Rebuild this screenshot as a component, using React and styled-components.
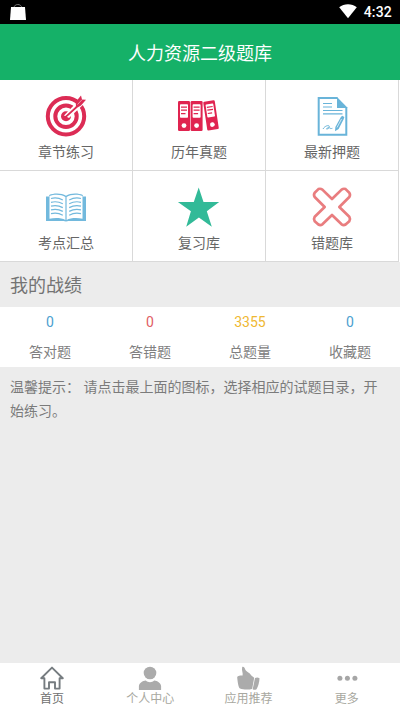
import React from "react";
import styled, { createGlobalStyle } from "styled-components";

const Global = createGlobalStyle`
  * { box-sizing: border-box; }
  body {
    margin: 0;
    background: #ececec;
    font-family: Roboto, "Noto Sans CJK SC", sans-serif;
  }
  svg { display: block; flex: none; }
`;

const Screen = styled.div`
  width: 400px;
  height: 710px;
  display: flex;
  flex-direction: column;
  overflow: hidden;
  background: #ececec;
`;

const StatusBar = styled.div`
  height: 24px;
  flex: none;
  display: flex;
  align-items: center;
  justify-content: space-between;
  padding: 0 8px 0 9px;
  background: #000;
`;

const StatusRight = styled.div`
  display: flex;
  align-items: flex-start;
  gap: 7px;
`;

const Clock = styled.span`
  color: #fff;
  font-size: 14px;
  font-weight: 500;
  line-height: 24px;
  letter-spacing: 0.2px;
`;

const Header = styled.header`
  height: 56px;
  flex: none;
  display: flex;
  align-items: center;
  justify-content: center;
  background: #15b168;
  color: #fff;
  font-size: 18px;
`;

const MenuGrid = styled.div`
  flex: none;
  display: grid;
  grid-template-columns: repeat(3, 133px) 1px;
  grid-auto-rows: 91px;
  background: #fff;
`;

const MenuCell = styled.div`
  grid-column: ${(p) => p.$col};
  display: flex;
  flex-direction: column;
  align-items: center;
  padding-top: 14px;
  border-right: 1px solid #d9d9d9;
  border-bottom: 1px solid #d9d9d9;
`;

const MenuLabel = styled.span`
  margin-top: 4px;
  color: #666;
  font-size: 14px;
  line-height: 20px;
`;

const SectionTitle = styled.h2`
  height: 45px;
  flex: none;
  margin: 0;
  padding: 0 10px;
  color: #737373;
  font-size: 18px;
  font-weight: 400;
  line-height: 47px;
`;

const Stats = styled.div`
  height: 60px;
  flex: none;
  display: grid;
  grid-template-columns: repeat(4, 1fr);
  background: #fff;
`;

const Stat = styled.div`
  display: flex;
  flex-direction: column;
  align-items: center;
`;

const StatValue = styled.span`
  height: 30px;
  color: ${(p) => p.$color};
  font-size: 14px;
  line-height: 31px;
`;

const StatLabel = styled.span`
  height: 30px;
  color: #808080;
  font-size: 14px;
  line-height: 30px;
`;

const Tip = styled.p`
  flex: 1;
  margin: 0;
  padding: 8px 10px;
  color: #7b7b7b;
  font-size: 14px;
  line-height: 24px;
`;

const TabBar = styled.nav`
  height: 47px;
  flex: none;
  display: grid;
  grid-template-columns: repeat(4, 1fr);
  padding: 3px 4px 0 3px;
  background: #fff;
`;

const Tab = styled.div`
  display: flex;
  flex-direction: column;
  align-items: center;
  color: ${(p) => (p.$active ? "#707070" : "#a8a8a0")};
  font-size: 12px;
  line-height: 19px;
`;

const Icon44 = ({ children }) => (
  <svg width="44" height="44" viewBox="0 0 44 44" fill="none">{children}</svg>
);

const TargetIcon = () => (
  <Icon44>
    <g stroke="#dc2c55">
      <circle cx="22" cy="22.3" r="18.2" strokeWidth="4" />
      <circle cx="22" cy="22.3" r="10.7" strokeWidth="4" />
    </g>
    <circle cx="22" cy="22.3" r="5" fill="#dc2c55" />
    <path d="M20 21.5L36 5L42 8L25 24Z" fill="#fff" />
    <path d="M21 22.5L32 12.5L31.7 8L37 1.5L38 5.5L42 5.7L37 11.5L33.5 13.5L22.3 23.5Z" fill="#dc2c55" />
    <path d="M20.8 23.2L33 12" stroke="#dc2c55" strokeWidth="1.2" />
    <path d="M21.5 21.5L31.5 12.2" stroke="#fff" strokeWidth=".8" />
    <path d="M33.5 10.5L38 5.7" stroke="#fff" strokeWidth=".5" />
  </Icon44>
);

const Binder = ({ transform }) => (
  <g transform={transform}>
    <rect width="12" height="30" rx="1.2" fill="#e02450" />
    <rect x="2" y="3.2" width="8" height="13.6" rx=".8" fill="#fff" />
    <path d="M3 6.2H9M3 9.2H9M3 12.6H7.5" stroke="#e02450" strokeWidth="1.2" />
    <circle cx="6" cy="24.6" r="2.4" fill="#fff" />
  </g>
);

const BindersIcon = () => (
  <Icon44>
    <Binder transform="translate(1 7)" />
    <Binder transform="translate(13.6 7)" />
    <Binder transform="translate(26.1 7.8) rotate(-8.5) scale(.97)" />
  </Icon44>
);

const PaperIcon = () => (
  <Icon44>
    <path d="M27.5 4H8.7V40.7H36.3V13" stroke="#69b4d9" strokeWidth="2" />
    <path d="M27 3L37.3 13.5V14H27Z" fill="#69b4d9" />
    <path d="M13 9.5H22M13 13H22M13 16.5H32.5M13 19.8H32.5" stroke="#69b4d9" strokeWidth="1.2" />
    <path d="M32.1 21.7L34.4 23L33.5 25.5L28.6 35L25 37.2L25.4 33L30.6 23.5Z" fill="#69b4d9" />
    <path d="M27 33.5L31.5 25" stroke="#fff" strokeWidth=".7" />
    <path d="M13 35C15 31.5 19 31 19.3 32.2C19.5 33.6 15.5 34.6 16.7 35C18 35.2 20 32.7 20.2 34.1C20.3 35 21.3 34.5 22.4 34.3" stroke="#69b4d9" strokeWidth="1" />
  </Icon44>
);

const BookIcon = () => (
  <Icon44>
    <path d="M2 11.5H5.2V10C10 7.8 18 8 22 10.8C26 8 34 7.8 38.8 10V11.5H42V36H24.5L22 36.6L19.5 36H2Z" fill="#72b9dd" />
    <path d="M5.5 11C10.5 9.1 17.5 9.4 21.4 12V35C17.5 32.8 10.5 32.7 5.5 33.8Z" fill="#fff" />
    <path d="M38.5 11C33.5 9.1 26.5 9.4 22.6 12V35C26.5 32.8 33.5 32.7 38.5 33.8Z" fill="#fff" />
    {[13.5, 17.3, 21.1, 24.9, 28.7].map((y) => (
      <g key={y} stroke="#72b9dd" strokeWidth="1.2">
        <path d={`M7 ${y}C11 ${y - 1} 15 ${y - 0.6} 18.8 ${y + 1.5}`} />
        <path d={`M37 ${y}C33 ${y - 1} 29 ${y - 0.6} 25.2 ${y + 1.5}`} />
      </g>
    ))}
  </Icon44>
);

const StarIcon = () => (
  <Icon44>
    <path d="M21.7 2.5L26.5 17H42.2L29.8 26.3L34.8 41.8L21.9 32.4L9.2 41.8L13.9 26.3L.9 17H16.8Z" fill="#32ba98" />
  </Icon44>
);

const CrossIcon = () => (
  <Icon44>
    <path
      d="M4.7 7.7L8.4 4.1Q10.4 3.2 12.4 4.6L22 14L31.6 4.6Q33.6 3.2 35.6 4.1L39.3 7.7Q40.7 9.8 39.3 12L29.3 22L39.3 31.7Q40.7 34 39.3 36.2L35.6 39.5Q33.6 40.7 31.6 39.3L22 30L12.4 39.3Q10.4 40.7 8.4 39.5L4.7 36.2Q3.3 34 4.7 31.7L14.7 22L4.7 12Q3.3 9.8 4.7 7.7Z"
      stroke="#e97d7f"
      strokeWidth="2.7"
      strokeLinejoin="round"
    />
  </Icon44>
);

const HomeIcon = () => (
  <svg width="24" height="24" viewBox="0 0 24 24" fill="none" stroke="#767c80" strokeWidth="1.9" strokeLinejoin="round">
    <path d="M12 1.6L1.2 12.2H4.4V22.6H9V16.3H15V22.6H19.6V12.2H22.8Z" />
  </svg>
);

const PersonIcon = () => (
  <svg width="24" height="24" viewBox="0 0 24 24" fill="#ababab">
    <circle cx="12" cy="7" r="6.3" />
    <path d="M.9 24V20C1.5 16.5 4.5 14.8 7.8 14.4C10 16.7 14 16.7 16.2 14.4C19.5 14.8 22.5 16.5 23.1 20V24Z" />
  </svg>
);

const ThumbIcon = () => (
  <svg width="24" height="24" viewBox="0 0 24 24" fill="#ababab">
    <path d="M5.2 1.1C6.5.2 7.7 1.7 8.1 3.2C8.7 5 11.1 6.2 12.5 7.3C13.8 9 15.3 10.5 17.2 11.7L15.2 22.7C12 24 6.5 23.8 3 22.5C1.4 21.8 .6 15.5.2 11.5C.4 9.7 1.8 9.5 5.6 9.4C6.3 7.2 4.3 4.5 5.2 1.1Z" />
    <path d="M18 12.1Q20.2 10.8 22.5 12.2C22.4 16 21.3 20 19.5 23.2Q17.5 24.3 15.7 23.2Z" />
  </svg>
);

const MoreIcon = () => (
  <svg width="24" height="24" viewBox="0 0 24 24" fill="#a6a6a6">
    <circle cx="4.9" cy="12.3" r="2.5" />
    <circle cx="12.4" cy="12.3" r="2.5" />
    <circle cx="19.9" cy="12.3" r="2.5" />
  </svg>
);

const BagIcon = () => (
  <svg width="18" height="18" viewBox="0 0 18 18">
    <path d="M5 4.5C5.5.5 12 .5 12.8 4.5" fill="none" stroke="#777" strokeWidth="1" />
    <path d="M2 4H16L17 17H1Z" fill="#fff" />
  </svg>
);

const WifiIcon = () => (
  <svg width="18" height="20" viewBox="0 0 18 20">
    <path d="M.2 7.2C5 3.3 13 3.3 17.8 7.2L9 18.2Z" fill="#fff" />
  </svg>
);

const menu = [
  { label: "章节练习", Icon: TargetIcon },
  { label: "历年真题", Icon: BindersIcon },
  { label: "最新押题", Icon: PaperIcon },
  { label: "考点汇总", Icon: BookIcon },
  { label: "复习库", Icon: StarIcon },
  { label: "错题库", Icon: CrossIcon },
];

const stats = [
  { value: "0", label: "答对题", color: "#4c9fd0" },
  { value: "0", label: "答错题", color: "#df6065" },
  { value: "3355", label: "总题量", color: "#efb832" },
  { value: "0", label: "收藏题", color: "#4c9fd0" },
];

const tabs = [
  { label: "首页", Icon: HomeIcon, active: true },
  { label: "个人中心", Icon: PersonIcon },
  { label: "应用推荐", Icon: ThumbIcon },
  { label: "更多", Icon: MoreIcon },
];

export default function App() {
  return (
    <Screen>
      <Global />
      <StatusBar>
        <BagIcon />
        <StatusRight>
          <WifiIcon />
          <Clock>4:32</Clock>
        </StatusRight>
      </StatusBar>
      <Header>人力资源二级题库</Header>
      <MenuGrid>
        {menu.map(({ label, Icon }, i) => (
          <MenuCell key={label} $col={(i % 3) + 1}>
            <Icon />
            <MenuLabel>{label}</MenuLabel>
          </MenuCell>
        ))}
      </MenuGrid>
      <SectionTitle>我的战绩</SectionTitle>
      <Stats>
        {stats.map(({ value, label, color }) => (
          <Stat key={label}>
            <StatValue $color={color}>{value}</StatValue>
            <StatLabel>{label}</StatLabel>
          </Stat>
        ))}
      </Stats>
      <Tip>温馨提示： 请点击最上面的图标，选择相应的试题目录，开始练习。</Tip>
      <TabBar>
        {tabs.map(({ label, Icon, active }) => (
          <Tab key={label} $active={active}>
            <Icon />
            {label}
          </Tab>
        ))}
      </TabBar>
    </Screen>
  );
}
